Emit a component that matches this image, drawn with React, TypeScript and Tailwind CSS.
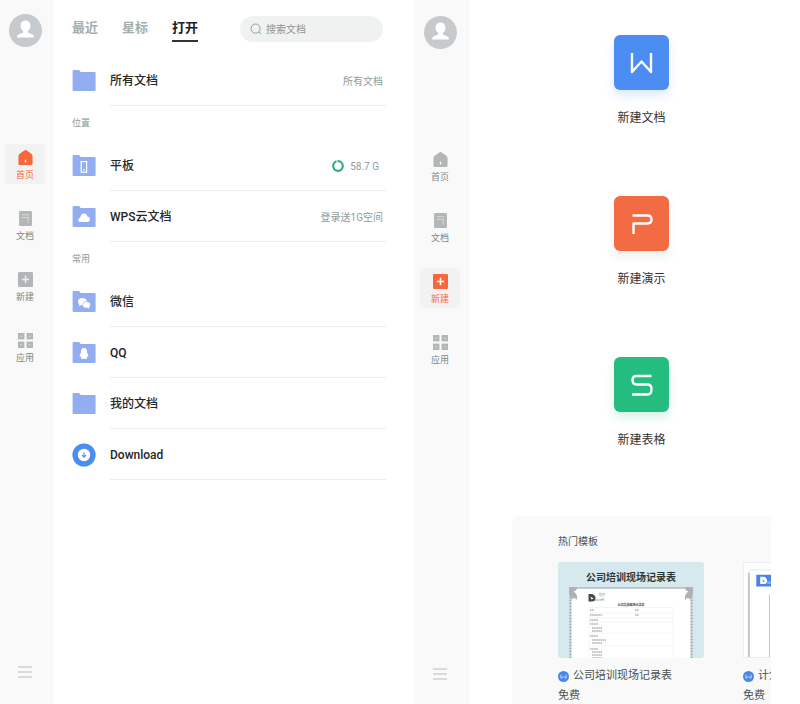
import type { ReactNode } from "react"
import clsx from "clsx"

type NavKey = "home" | "docs" | "new" | "apps"

function HomeIcon() {
  return (
    <svg viewBox="0 0 14 14" className="h-[15px] w-[15px]" fill="currentColor">
      <path
        fillRule="evenodd"
        d="M6.2.3Q7-.2 7.8.3L12.4 3.6Q13.6 4.6 13.6 6V12.8Q13.6 14 12.4 14H1.6Q.4 14 .4 12.8V6Q.4 4.6 1.6 3.6ZM6.4 9V11.6H7.7V9Z"
      />
    </svg>
  )
}

function DocIcon() {
  return (
    <svg viewBox="0 0 14 14" className="h-[15px] w-[15px]">
      <rect x="1" width="12" height="14" rx="1" fill="currentColor" />
      <path d="M3.5 3.6H10.5M3.5 6.2H10.5M9.5 6.2V11" stroke="#dfe1e1" strokeWidth=".8" />
    </svg>
  )
}

function PlusIcon({ active }: { active: boolean }) {
  return (
    <svg viewBox="0 0 14 14" className="h-[15px] w-[15px]">
      <rect width="14" height="14" rx="1.2" fill="currentColor" />
      <path d="M7 3.6V10.4M3.6 7H10.4" stroke={active ? "#fff" : "#eceded"} strokeWidth="1.4" />
    </svg>
  )
}

function AppsIcon() {
  return (
    <svg viewBox="0 0 14 14" className="h-[15px] w-[15px]" fill="currentColor">
      <rect width="6" height="6" />
      <rect x="8" width="6" height="6" />
      <rect y="8" width="6" height="6" />
      <rect x="8" y="8" width="6" height="6" />
      <path d="M2 3h2M10 3h2M2 11h2M10 11h2" stroke="#d4d7d7" strokeWidth="1" />
    </svg>
  )
}

const navItems: { key: NavKey; label: string }[] = [
  { key: "home", label: "首页" },
  { key: "docs", label: "文档" },
  { key: "new", label: "新建" },
  { key: "apps", label: "应用" },
]

function Sidebar({ active, className }: { active: NavKey; className: string }) {
  return (
    <aside className={clsx("flex shrink-0 flex-col items-center bg-[#f9f9f9] pr-1", className)}>
      <button aria-label="账号" className="h-[33px] w-[33px]">
        <svg viewBox="0 0 33 33">
          <circle cx="16.5" cy="16.5" r="16.5" fill="#c7cacc" />
          <path
            d="M16.5 6.6C19.5 6.6 21.4 8.7 21.4 11.8C21.4 14.2 20.4 16 18.8 17.1V18.6L23.5 20.6Q25 21.4 25 23.6H8Q8 21.4 9.5 20.6L14.2 18.6V17.1C12.6 16 11.6 14.2 11.6 11.8C11.6 8.7 13.5 6.6 16.5 6.6Z"
            fill="#fff"
          />
        </svg>
      </button>
      <nav className="mt-[97px] flex flex-col gap-[21px]">
        {navItems.map(({ key, label }) => {
          const isActive = key === active
          return (
            <button
              key={key}
              className={clsx(
                "flex h-10 w-10 flex-col items-center gap-1 rounded-sm pt-1.5 text-[9px] leading-3",
                isActive ? "bg-[#f1f2f1] text-[#f8673c]" : "text-[#7f8686]"
              )}
            >
              <span className={isActive ? "text-[#f8673c]" : "text-[#b2b6b6]"}>
                {key === "home" && <HomeIcon />}
                {key === "docs" && <DocIcon />}
                {key === "new" && <PlusIcon active={isActive} />}
                {key === "apps" && <AppsIcon />}
              </span>
              {label}
            </button>
          )
        })}
      </nav>
      <button aria-label="菜单" className="mt-auto flex h-5 w-5 items-center justify-center">
        <svg viewBox="0 0 14 12" className="h-3 w-3.5">
          <path d="M0 1H14M0 6H14M0 11H14" stroke="#b9bcbe" strokeWidth="1.2" />
        </svg>
      </button>
    </aside>
  )
}

function FolderIcon({ children }: { children?: ReactNode }) {
  return (
    <svg viewBox="0 0 24 24" className="h-6 w-6 shrink-0">
      <path
        d="M.6 2Q.6 1 1.6 1H6.6Q7.4 1 7.9 1.8L8.6 3H22.6Q23.6 3 23.6 4V21Q23.6 22 22.6 22H1.6Q.6 22 .6 21Z"
        fill="#93aef0"
      />
      {children}
    </svg>
  )
}

function TabletFolder() {
  return (
    <FolderIcon>
      <rect x="9.2" y="7.6" width="5.4" height="10.6" fill="none" stroke="#fff" strokeWidth="1.2" />
      <path d="M11 15.8H13" stroke="#fff" strokeWidth="1" />
    </FolderIcon>
  )
}

function CloudFolder() {
  return (
    <FolderIcon>
      <path
        d="M8.6 17C7 17 6.2 16 6.2 14.9C6.2 13.6 7.2 12.9 8.3 12.8C8.4 10.2 10 8.6 12 8.6C14 8.6 15.1 9.8 15.3 11.6C17 11.6 18 12.8 18 14.3C18 16 16.9 17 15.3 17Z"
        fill="#fff"
      />
    </FolderIcon>
  )
}

function WechatFolder() {
  return (
    <FolderIcon>
      <ellipse cx="10.4" cy="11.6" rx="4.4" ry="3.7" fill="#fff" />
      <path d="M7.4 13.5L7 16.2L9.8 14.8Z" fill="#fff" />
      <ellipse cx="14.4" cy="14.8" rx="4" ry="3.3" fill="#fff" stroke="#93aef0" strokeWidth=".6" />
      <path d="M15 17.4L17.2 18.8L17 16.6Z" fill="#fff" />
    </FolderIcon>
  )
}

function QQFolder() {
  return (
    <FolderIcon>
      <path
        d="M12 7C14 7 15 8.5 15 10.4V11.6C15.9 12.9 16.4 14 16.3 15.6C16 16 15.6 15.6 15.3 15.2C15.1 16 14.8 16.4 14.5 16.8L15.2 17.6C14.8 18.3 12.7 18.2 12 17.6C11.3 18.2 9.2 18.3 8.8 17.6L9.5 16.8C9.2 16.4 8.9 16 8.7 15.2C8.4 15.6 8 16 7.7 15.6C7.6 14 8.1 12.9 9 11.6V10.4C9 8.5 10 7 12 7Z"
        fill="#fff"
      />
    </FolderIcon>
  )
}

function DownloadIcon() {
  return (
    <svg viewBox="0 0 24 24" className="h-6 w-6 shrink-0">
      <circle cx="12" cy="12" r="11.6" fill="#4b8df0" />
      <circle cx="12" cy="12" r="6.2" fill="#fff" />
      <path d="M12 9.4V14M10 12.2L12 14.2L14 12.2" fill="none" stroke="#4b8df0" strokeWidth="1.1" />
    </svg>
  )
}

function FileRow({ icon, label, children }: { icon: ReactNode; label: string; children?: ReactNode }) {
  return (
    <li>
      <button className="flex h-[51px] w-full items-center gap-3.5 text-left whitespace-nowrap">
        {icon}
        <span className="flex h-full flex-1 items-center justify-between border-b border-[#eeeeee] pt-0.5 pr-[3px]">
          <span className="text-xs font-medium text-[#262626]">{label}</span>
          <span className="flex items-center gap-1.5 text-[10px] text-[#929a9a]">{children}</span>
        </span>
      </button>
    </li>
  )
}

function SectionTitle({ children }: { children: ReactNode }) {
  return <h2 className="flex h-[34px] items-center pt-0.5 text-[9px] text-[#8f9797]">{children}</h2>
}

function OpenScreen() {
  const tabs = ["最近", "星标", "打开"]
  return (
    <section className="flex min-w-0 flex-[414] bg-white">
      <Sidebar active="home" className="w-[54px] pt-3.5 pb-6" />
      <main className="min-w-0 flex-1 pr-7 pl-[18px]">
        <header className="flex h-[55px] items-start justify-between pt-4 pr-[3px]">
          <div role="tablist" className="flex gap-6 whitespace-nowrap">
            {tabs.map((tab) => (
              <button
                key={tab}
                role="tab"
                aria-selected={tab === "打开"}
                className={clsx(
                  "h-[26px] border-b-2 pt-0.5 pb-1 text-[13px] leading-5 font-bold",
                  tab === "打开" ? "border-[#333] text-[#222]" : "border-transparent text-[#a5adab]"
                )}
              >
                {tab}
              </button>
            ))}
          </div>
          <label className="flex h-[26px] w-[143px] items-center gap-1 rounded-full bg-[#f0f2f2] px-2.5">
            <svg viewBox="0 0 12 12" className="h-3 w-3 shrink-0" fill="none" stroke="#939b9b">
              <circle cx="5.6" cy="5.6" r="4.6" />
              <path d="M9 9L11.2 11.2" />
            </svg>
            <input
              type="search"
              aria-label="搜索文档"
              placeholder="搜索文档"
              className="w-full min-w-0 bg-transparent text-[10px] outline-none placeholder:text-[#8c9494]"
            />
          </label>
        </header>
        <ul>
          <FileRow icon={<FolderIcon />} label="所有文档">所有文档</FileRow>
        </ul>
        <SectionTitle>位置</SectionTitle>
        <ul>
          <FileRow icon={<TabletFolder />} label="平板">
            <svg viewBox="0 0 12 12" className="h-3 w-3" fill="none">
              <circle cx="6" cy="6" r="4.8" stroke="#35ab80" strokeWidth="2.2" />
              <path d="M6 6L4.8 0" stroke="#fff" strokeWidth="1" />
            </svg>
            <span className="pr-1">58.7 G</span>
          </FileRow>
          <FileRow icon={<CloudFolder />} label="WPS云文档">登录送1G空间</FileRow>
        </ul>
        <SectionTitle>常用</SectionTitle>
        <ul>
          <FileRow icon={<WechatFolder />} label="微信" />
          <FileRow icon={<QQFolder />} label="QQ" />
          <FileRow icon={<FolderIcon />} label="我的文档" />
          <FileRow icon={<DownloadIcon />} label="Download" />
        </ul>
      </main>
    </section>
  )
}

const createItems = [
  {
    label: "新建文档",
    tile: "bg-[#4b8df2] shadow-[0_6px_10px_#4b8df22e]",
    path: "M18 18V37L27.5 26.5L37 37V18",
  },
  {
    label: "新建演示",
    tile: "bg-[#f36b43] shadow-[0_6px_10px_#99999926]",
    path: "M18.5 19.5H33.5Q37.5 19.5 37.5 23.5Q37.5 27.5 33.5 27.5H19.5V38",
  },
  {
    label: "新建表格",
    tile: "bg-[#25bc80] shadow-[0_6px_10px_#25bc802e]",
    path: "M37.5 19H22.5Q18.5 19 18.5 23Q18.5 27.5 22.5 27.5H33.5Q37.5 27.5 37.5 32Q37.5 37.5 33.5 37.5H18",
  },
]

function WriterBadge() {
  return (
    <svg viewBox="0 0 12 12" className="h-[11px] w-[11px] shrink-0">
      <circle cx="6" cy="6" r="6" fill="#4a86e8" />
      <path d="M3.2 4V8L6 6L8.8 8V4" fill="none" stroke="#cfe0fb" strokeWidth="1" />
    </svg>
  )
}

// small lines of the form: x, y, width
const formLines = [
  [32, 48, 4], [77, 48, 4], [32, 53, 12], [77, 53, 4], [32, 58, 8], [32, 62, 8],
  [34, 66, 10], [34, 69, 10], [32, 74, 8], [34, 78, 14], [34, 81, 10],
  [32, 87, 8], [34, 90, 10], [34, 93, 10], [34, 96, 11],
]

function TrainingThumb() {
  return (
    <div className="relative h-24 overflow-hidden rounded-[3px] bg-[#d5e9ee]">
      <svg viewBox="0 0 146 96" className="h-full w-full">
        <path d="M12.5 96V26.5H133.5V96" fill="#fff" />
        <path d="M12.5 26H133.5" stroke="#9ea5a5" strokeWidth="1" />
        <path d="M12.5 96V26M133.5 26V96" stroke="#9ea5a5" strokeWidth="2" strokeDasharray="1 .5" />
        <path
          d="M11 25H19Q19 29 15.5 29.5Q20 32 19 38Q16 34 13 38Q13 34 11 32ZM135 25H127Q127 29 130.5 29.5Q126 32 127 38Q130 34 133 38Q133 34 135 32Z"
          fill="#aeb3b1"
        />
        <path
          fillRule="evenodd"
          d="M30.5 32H34Q37.5 33 37.5 36Q37.5 39.5 34 39.5H30.5ZM32.5 34.5L33.5 37.5L35.5 36.5Z"
          fill="#454b4b"
        />
        <text x="37" y="39" fontSize="4" fill="#8d9494">oceR</text>
        <text x="41" y="34" fontSize="3" fill="#8d9494">稻壳</text>
        <text x="73" y="44" fontSize="3" fontWeight="700" textAnchor="middle" fill="#333">公司培训现场记录表</text>
        <path d="M31 45.5H115V96M31 51H115M31 56H115M31 60H115M31 71H115M31 84H115M31 45.5V96" fill="none" stroke="#eceeee" strokeWidth=".6" />
        {formLines.map(([x, y, w]) => (
          <path key={`${x}-${y}`} d={`M${x} ${y}h${w}`} stroke="#8a8f8f" strokeWidth="1" strokeDasharray="1.6 .5" />
        ))}
      </svg>
      <strong className="absolute inset-x-0 top-2 text-center text-[10px] leading-4 font-bold text-[#2f3536]">
        公司培训现场记录表
      </strong>
    </div>
  )
}

function PlanThumb() {
  return (
    <div className="h-24 overflow-hidden border border-[#eeeeee] bg-white">
      <svg viewBox="0 0 146 96" className="h-full w-full">
        <path d="M4 96V10L5 7H141V96" fill="none" stroke="#e4e7e9" strokeWidth="1" />
        <path d="M4.5 96V10M141.5 10V96" stroke="#c3c7ca" strokeWidth="2" />
        <rect x="12" y="12" width="40" height="12" fill="#4b83e6" />
        <path
          fillRule="evenodd"
          d="M16 14H19.5Q23 15 23 18Q23 21.5 19.5 21.5H16ZM18 17L19 19.5L21 18.5Z"
          fill="#fff"
        />
        <text x="23" y="21" fontSize="5" fill="#cfe0fb">oceR</text>
        <path d="M25.5 32V96" stroke="#bfc3c6" strokeWidth="1" />
      </svg>
    </div>
  )
}

function TemplateCard({ name, children }: { name: string; children: ReactNode }) {
  return (
    <a href="#" className="block w-[146px] shrink-0 text-[11px] leading-5 text-[#4b5052]">
      {children}
      <span className="mt-2 flex items-center gap-1 whitespace-nowrap">
        <WriterBadge />
        {name}
      </span>
      <span className="block">免费</span>
    </a>
  )
}

function CreateScreen() {
  return (
    <section className="flex min-w-0 flex-[386] bg-white">
      <Sidebar active="new" className="w-14 pt-4 pb-[22px]" />
      <main className="flex min-w-0 flex-1 flex-col pt-[35px] pr-[29px] pl-[42px]">
        <div className="flex flex-col items-center gap-[70px]">
          {createItems.map(({ label, tile, path }) => (
            <button key={label} className="flex flex-col items-center gap-5 text-xs leading-4 text-[#333]">
              <span className={clsx("h-[55px] w-[55px] rounded-md", tile)}>
                <svg viewBox="0 0 55 55" fill="none" stroke="#fff" strokeWidth="2.4" strokeLinejoin="round">
                  <path d={path} />
                </svg>
              </span>
              {label}
            </button>
          ))}
        </div>
        <div className="mt-[68px] flex-1 overflow-hidden rounded-t-md bg-[#f9f9f9] pt-4 pl-[46px]">
          <h2 className="text-[10px] leading-5 text-[#4b5052]">热门模板</h2>
          <div className="mt-2.5 flex gap-[39px]">
            <TemplateCard name="公司培训现场记录表">
              <TrainingThumb />
            </TemplateCard>
            <TemplateCard name="计划表">
              <PlanThumb />
            </TemplateCard>
          </div>
        </div>
      </main>
    </section>
  )
}

export default function App() {
  return (
    <div className="flex min-h-screen bg-white font-['Roboto','Noto_Sans_CJK_SC',sans-serif]">
      <OpenScreen />
      <CreateScreen />
    </div>
  )
}
